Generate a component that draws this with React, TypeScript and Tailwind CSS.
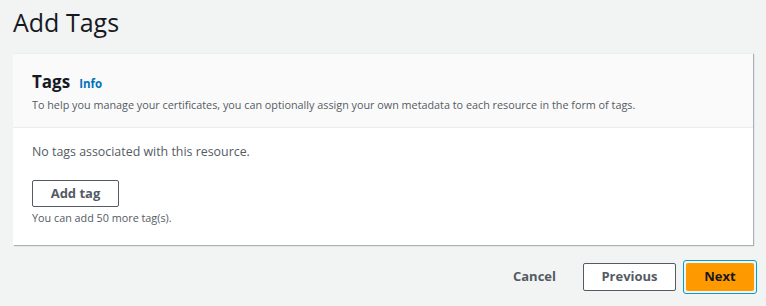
import React from 'react';

const font = { fontFamily: '"Open Sans", "Noto Sans", Arial, sans-serif' };

export default function App() {
  return (
    <div className="w-[766px] h-[306px] bg-[#f2f3f3] text-[#16191f] overflow-hidden" style={font}>
      <h1 className="pl-[13px] pt-[5px] text-[25px] leading-[34px] font-normal">Add Tags</h1>

      <div className="ml-[13px] mt-[14px] w-[740px] bg-white shadow-[1px_1px_1px_rgba(0,22,44,0.3)] border-t border-[#eaeded]">
        <div className="bg-[#fafafa] border-b border-[#eaeded] px-[19px] pt-[16px] pb-[14px]">
          <div className="flex items-baseline gap-[9px]">
            <span className="text-[17px] leading-[24px] font-bold">Tags</span>
            <span className="text-[11.5px] font-bold text-[#0073bb]">Info</span>
          </div>
          <p className="mt-[3px] text-[10.8px] leading-[16px] text-[#545b64]">
            To help you manage your certificates, you can optionally assign your own metadata to each resource in the form of tags.
          </p>
        </div>
        <div className="px-[19px] pt-[14px] pb-[20px]">
          <p className="text-[12.4px] leading-[20px] text-[#545b64]">No tags associated with this resource.</p>
          <button className="mt-[18px] w-[87px] h-[27px] border border-[#545b64] rounded-[2px] bg-white text-[13px] font-bold text-[#545b64]">
            Add tag
          </button>
          <p className="mt-[4px] text-[10.8px] leading-[14px] text-[#545b64]">You can add 50 more tag(s).</p>
        </div>
      </div>

      <div className="flex justify-end items-center mt-[15px] pr-[9px]">
        <button className="text-[13px] font-bold text-[#545b64] mr-[27px]">Cancel</button>
        <button className="w-[93px] h-[28px] border border-[#545b64] rounded-[2px] bg-white text-[13px] font-bold text-[#545b64] mr-[7px]">
          Previous
        </button>
        <div className="p-[2px] rounded-[3px] border border-[#00a1c9]">
          <button className="w-[68px] h-[28px] bg-[#ff9900] rounded-[2px] text-[13px] font-bold text-[#16191f]">
            Next
          </button>
        </div>
      </div>
    </div>
  );
}
